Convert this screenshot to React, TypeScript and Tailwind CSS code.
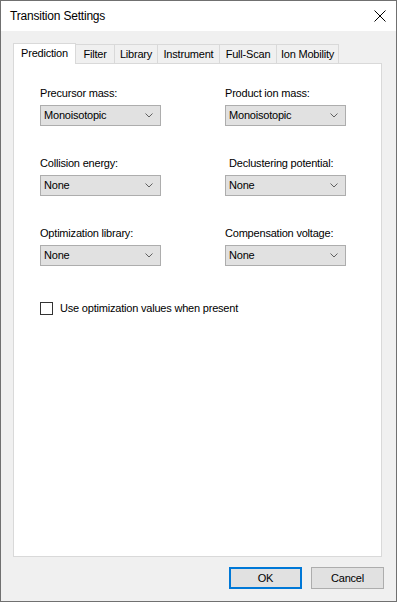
import React from "react";

const font = { fontFamily: '"Liberation Sans", Arial, sans-serif' };

const tabs = ["Prediction", "Filter", "Library", "Instrument", "Full-Scan", "Ion Mobility"];
const tabWidths = ["w-[63px]", "w-[39px]", "w-[43px]", "w-[62px]", "w-[57px]", "w-[62px]"];

const txt = "text-[11px] tracking-[-0.2px] text-black";

const Combo = ({ value }: { value: string }) => (
  <div className={`flex items-center justify-between w-[121px] h-[21px] bg-[#e1e1e1] border border-[#adadad] pl-[3px] pr-[6px] ${txt}`}>
    <span>{value}</span>
    <svg width="8" height="5" viewBox="0 0 8 5" className="mr-[1px]">
      <path d="M0.5 0.5 L4 4 L7.5 0.5" stroke="#606060" strokeWidth="1" fill="none" />
    </svg>
  </div>
);

const Field = ({ label, value, indent }: { label: string; value: string; indent?: boolean }) => (
  <div className="flex flex-col">
    <div className={`h-[13px] leading-[13px] mb-[5px] ${txt} ${indent ? "pl-[4px]" : ""}`}>{label}</div>
    <Combo value={value} />
  </div>
);

const rows = [
  [["Precursor mass:", "Monoisotopic"], ["Product ion mass:", "Monoisotopic"]],
  [["Collision energy:", "None"], ["Declustering potential:", "None"]],
  [["Optimization library:", "None"], ["Compensation voltage:", "None"]],
];

export default function App() {
  return (
    <div style={font} className="w-[397px] h-[602px] flex flex-col bg-[#f0f0f0] border border-[#707070] overflow-hidden">
      {/* title bar */}
      <div className="h-[30px] bg-white flex items-center justify-between pl-[9px] pr-[10px]">
        <span className="text-[12px] tracking-[-0.2px] text-black">Transition Settings</span>
        <svg width="12" height="12" viewBox="0 0 12 12" className="mb-[1px]">
          <path d="M0.5 0.5 L11.5 11.5 M11.5 0.5 L0.5 11.5" stroke="#000" strokeWidth="1" fill="none" />
        </svg>
      </div>

      {/* tabs */}
      <div className="flex items-end pl-[12px] pt-[12px] h-[32px]">
        {tabs.map((t, i) =>
          i === 0 ? (
            <div
              key={t}
              className={`${tabWidths[i]} h-[21px] -mb-px relative z-10 bg-white border border-b-0 border-[#d9d9d9] flex items-center justify-center pb-[1px] ${txt}`}
            >
              {t}
            </div>
          ) : (
            <div
              key={t}
              className={`${tabWidths[i]} h-[19px] bg-[#f0f0f0] border border-b-0 border-l-0 border-[#d9d9d9] flex items-center justify-center pt-[1px] ${txt}`}
            >
              {t}
            </div>
          )
        )}
      </div>

      {/* panel */}
      <div className="ml-[12px] w-[369px] h-[494px] bg-white border border-[#d9d9d9] pl-[26px] pt-[23px]">
        <div className="flex flex-col gap-[31px]">
          {rows.map((r, i) => (
            <div key={i} className="flex gap-[64px]">
              <Field label={r[0][0]} value={r[0][1]} />
              <Field label={r[1][0]} value={r[1][1]} indent={i === 1} />
            </div>
          ))}
        </div>
        <div className="flex items-center mt-[34px]">
          <div className="w-[13px] h-[13px] border border-[#333] bg-white" />
          <span className={`ml-[7px] ${txt}`}>Use optimization values when present</span>
        </div>
      </div>

      {/* buttons */}
      <div className="flex justify-end gap-[9px] pr-[12px] pt-[10px]">
        <button className={`w-[73px] h-[22px] bg-[#e1e1e1] border-2 border-[#0078d7] ${txt}`}>OK</button>
        <button className={`w-[73px] h-[22px] bg-[#e1e1e1] border border-[#adadad] ${txt}`}>Cancel</button>
      </div>
    </div>
  );
}
